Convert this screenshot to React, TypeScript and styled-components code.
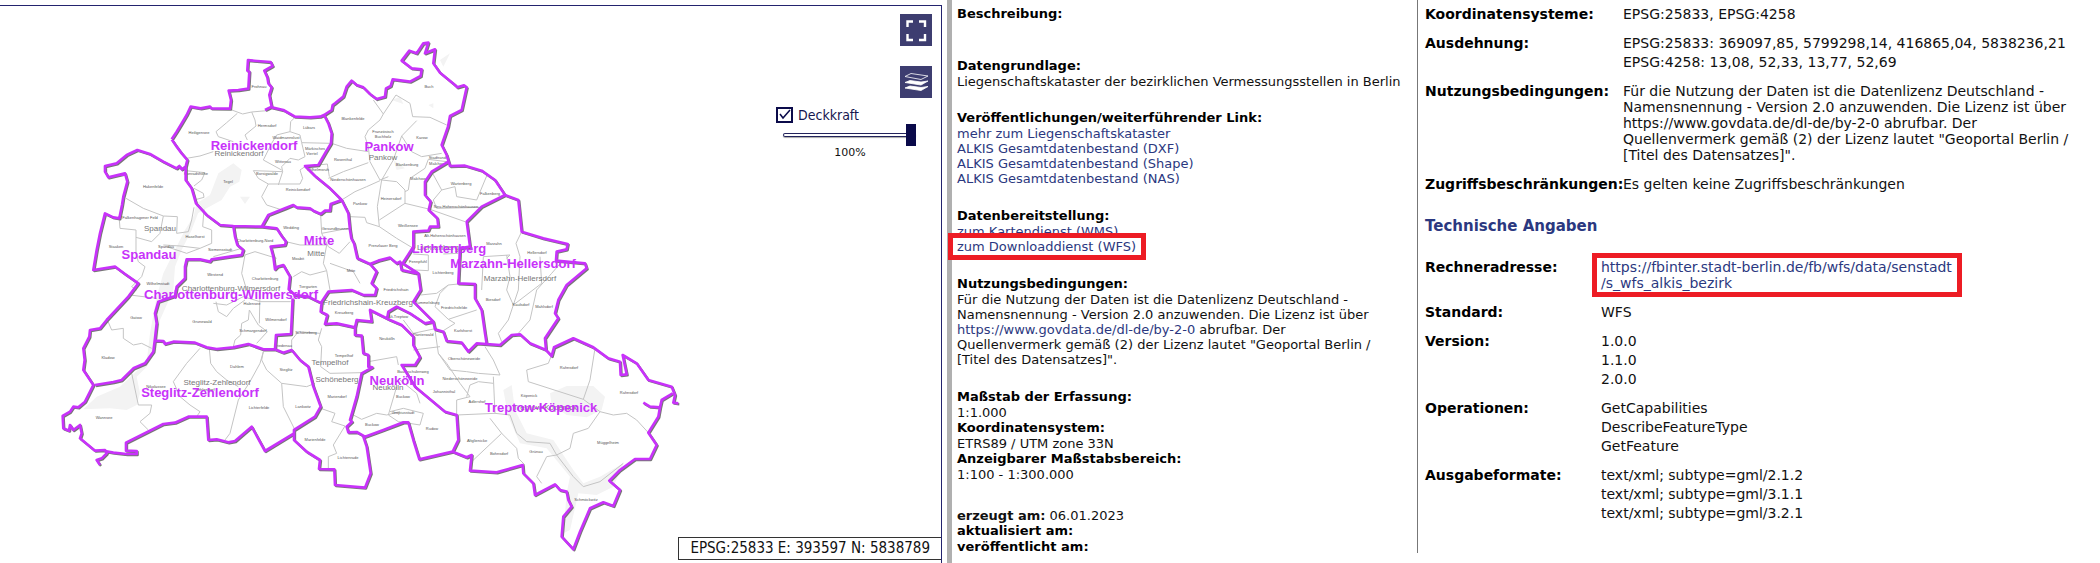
import React, { useState } from "react";
import styled, { createGlobalStyle } from "styled-components";

const GlobalStyle = createGlobalStyle`
  * { box-sizing: border-box; }
  body {
    margin: 0;
    background: #fff;
    color: #111;
    font-family: "DejaVu Sans", Verdana, sans-serif;
  }
`;

const Page = styled.main`
  display: grid;
  grid-template-columns: minmax(0, 947fr) minmax(0, 470fr) minmax(0, 683fr);
  min-height: 100vh;
`;

/* ---------- map ---------- */

const MapPanel = styled.section`
  position: relative;
  margin: 5px 5px 0 0;
  border: solid #23236e;
  border-width: 1px 1px 0 0;
`;

const MapDrawing = styled.svg`
  display: block;
  width: 100%;
  height: auto;
`;

const Tools = styled.div`
  position: absolute;
  top: 8px;
  right: 9px;
  display: flex;
  flex-direction: column;
  gap: 20px;
`;

const ToolButton = styled.button`
  display: block;
  width: 32px;
  height: 32px;
  padding: 0;
  border: 0;
  background: #3d3d70;
  cursor: pointer;
`;

const OpacityControl = styled.div`
  position: absolute;
  top: 100px;
  right: 25px;
  width: 140px;
  display: flex;
  flex-direction: column;
  align-items: flex-end;
`;

const LayerToggle = styled.label`
  align-self: flex-start;
  display: flex;
  align-items: center;
  gap: 5px;
  height: 18px;
  font: 14px/18px "DejaVu Sans Condensed", "Noto Sans", sans-serif;
  color: #16164f;
`;

const Tick = styled.input`
  appearance: none;
  width: 17px;
  height: 16px;
  margin: 0;
  border: 2px solid #0b0b4a;
  background: #fff;
  &:checked {
    background: #fff
      url("data:image/svg+xml,%3Csvg xmlns='http://www.w3.org/2000/svg' viewBox='0 0 13 12'%3E%3Cpath d='M2 5l3 4 7-8' fill='none' stroke='%230b0b4a' stroke-width='1.5'/%3E%3C/svg%3E")
      center / 13px 12px no-repeat;
  }
`;

const Slider = styled.input`
  appearance: none;
  width: 133px;
  height: 22px;
  margin: 0;
  background: transparent;
  &::-webkit-slider-runnable-track {
    height: 4px;
    border-radius: 2px;
    background: #fff;
    box-shadow: inset 0 0 0 1px #23235c, 0 1px 1px #aaa;
  }
  &::-webkit-slider-thumb {
    appearance: none;
    width: 10px;
    height: 22px;
    margin-top: -9px;
    background: #0a0a4a;
  }
`;

const Percent = styled.output`
  align-self: center;
  padding-left: 8px;
  font-size: 11px;
  line-height: 14px;
`;

const Position = styled.div`
  position: absolute;
  right: 0;
  bottom: 3px;
  padding: 0 11px;
  border: 1px solid #333;
  border-right: 0;
  background: #fff;
  font: 15px/21px "DejaVu Sans Condensed", "Noto Sans", sans-serif;
`;

/* Outlines are digitised at three units per map pixel. */
const districtLines = [
  "M515 418L530 395 545 370 560 345 572 320 602 325 630 320 634 325 690 326 693 300 686 272 715 270 745 266 748 215 742 212 744 180 760 182 812 186 818 198 793 212 802 232 805 250 815 262 808 285 815 320 795 330M815 322L850 330 885 350 930 352 960 350 972 345",
  "M972 345L985 370 995 400 993 430 978 455 955 495 915 498 945 528 990 565 1025 600",
  "M515 418L530 440 545 460 562 480 557 500 557 540 575 565 588 610 620 645 660 675 700 678 785 680 830 685 845 708 858 725 855 735 812 740 820 770 825 808 832 800 850 795 870 830 866 868 885 885 925 890 965 910",
  "M785 680L805 645 855 625 880 615 890 622 930 625 940 632 962 642 975 632 990 632 992 612 1025 600 1045 640 1050 690 1054 715 1062 730 1072 775 1110 792",
  "M700 678L705 710 712 735 730 750 725 765 690 770 635 778 630 785 600 778 560 778 555 800 555 835 530 860 525 888 475 905 465 940 470 970 465 1015 460 1055 435 1090 400 1105 365 1140 340 1146 285 1155",
  "M557 500L545 508 538 498 530 505 490 485 450 462 412 450 380 465 350 490 315 498 315 515 325 532 375 520 382 545 370 590 366 615 358 655 340 652 315 640 300 700 290 750 280 810 345 800 375 822 415 850 385 890 320 960 300 985 270 990 268 1010 250 1045 254 1080 250 1110 280 1155 255 1205 235 1222 220 1220 210 1235 188 1248 190 1285 207 1292 210 1275 220 1290 240 1275 245 1300 240 1315 285 1352 315 1350 320 1360 305 1375 290 1380 300 1395",
  "M315 1353L340 1358 380 1362 410 1362 410 1353 378 1352 378 1328 490 1272 525 1268 565 1250 620 1250 625 1320 650 1318 685 1327 705 1323 755 1280 795 1353 882 1300",
  "M972 345L995 330 998 315 1005 310 1030 290 1040 260 1055 242 1070 255 1090 262 1110 282 1130 297 1155 290 1158 265 1172 258 1178 238 1230 245 1262 228 1265 208 1235 205 1205 182 1228 152 1250 160 1270 130 1285 128 1275 160 1305 148 1300 190 1320 218 1365 255 1372 262 1392 256 1400 262 1385 330 1350 348 1344 380 1325 435 1340 465 1350 498 1395 497 1445 512 1485 540 1515 585",
  "M1345 485L1295 515 1275 545 1275 585 1292 605 1286 630 1312 655 1315 680 1290 680 1285 692 1240 695 1240 740 1208 790 1255 820 1262 870 1240 905 1300 965 1305 988 1330 995 1340 1023 1385 1028 1405 1055 1430 1030 1500 1035 1535 1005 1560 1003 1590 1030 1638 1050 1655 1068 1662 1042 1720 1015 1780 1042 1825 1075 1860 1085 1862 1125 1880 1123 1868 1065 1910 1090 1945 1140 2015 1160 2025 1185 2020 1208 2035 1210",
  "M1072 775L1110 792 1135 782 1170 773 1190 790 1200 785 1205 810 1250 820",
  "M1110 792L1130 815 1115 850 1130 865 1125 885 1090 885 1055 870 985 875 965 905 962 935 982 945 975 972 1010 970 1065 982 1065 1005 1085 1007 1090 1060 1105 1065 1105 1100 1117 1102 1085 1120 1070 1190 1050 1260 1056 1265 1040 1280 1045 1297 1070 1296 1095 1310 1150 1290 1210 1267 1225 1267 1240 1320 1258 1378 1358 1355",
  "M1515 585L1445 620 1400 665 1410 740 1380 745 1375 850 1425 852 1425 895 1445 930 1455 1000 1460 1032",
  "M1515 585L1555 600 1565 695 1630 715 1703 732 1700 748 1670 755 1668 782 1755 790 1760 805 1700 855 1675 900 1665 940 1675 955 1635 1015 1638 1050",
  "M2018 1180L1985 1200 1980 1222 1950 1220 1930 1208M1980 1222L1975 1250 1945 1298 1970 1335 1950 1377 1905 1377 1860 1410 1828 1442 1860 1470 1840 1518 1810 1507 1770 1525 1740 1595 1720 1648 1685 1610 1690 1550 1715 1520 1705 1500 1700 1475 1680 1470 1665 1453 1605 1485 1600 1450 1570 1420 1568 1395 1490 1417 1410 1412 1415 1365 1400 1372 1358 1355 1375 1320 1370 1245 1335 1235 1245 1160 1205 1095 1245 1095 1260 1072 1240 1035 1240 1010 1205 975 1170 960 1110 930 1115 965 1070 960 1065 982",
  "M1162 952L1165 935 1190 920 1230 940 1275 970 1300 965",
  "M465 1022L490 1023 495 1032 520 1025 585 1028 620 1042 650 1047 700 1042 745 1032 790 1048 825 1048 828 1005 873 1002 878 895",
  "M825 1048L850 1058 875 1050 900 1080 925 1100 940 1160 962 1220 945 1250 882 1290 882 1320 920 1355 960 1380 957 1407 1003 1408 1005 1455 1095 1463 1112 1420 1100 1340 1090 1310",
];

const quarterLines = [
  "M690 328L728 342 755 336 800 332M712 340L680 368 648 395 655 410 700 425M755 336L765 360 768 378 735 405 742 420",
  "M885 352L872 365 870 395 900 405 905 428 995 430M870 395L830 405 815 430 790 480 845 510M905 428L915 470 895 480 870 475 845 500 848 515 835 555",
  "M760 512L848 515M760 512L775 535 805 552 900 552 908 535 900 510 915 500M805 552L785 590 800 615 840 628",
  "M560 475L600 468 640 455M557 512L615 518 605 540 582 558M582 565L610 580 612 592 590 598M582 622L575 660 565 695 530 700 532 650 490 648 480 700 455 725 408 712",
  "M378 595L430 625 490 648M358 660L360 685 408 690 408 760M612 628L608 680 635 690 635 730 600 745 540 738 490 735M600 745L560 760 500 740M408 760L415 785 435 800 425 830 395 860 410 870M640 770L725 745",
  "M735 765L725 820 740 870M735 765L765 755 830 775M780 875L778 970M640 910L680 915 730 890 780 905 872 905M648 905L655 935 680 950 700 925 735 900M320 955L335 990 370 985 370 1015 400 1035 425 1030 455 1045M390 885L470 895",
  "M600 1045L560 1090 520 1145 540 1190 570 1215 600 1235 590 1250M628 1045L632 1090 650 1115 680 1140 715 1160M395 1120L415 1215 455 1215 450 1240 420 1265 445 1290M790 1055L780 1090 750 1145 715 1200 690 1300 675 1320M790 1055L785 1080 800 1110 845 1150 850 1220 885 1290M845 1150L920 1160 945 1150",
  "M700 1040L705 1020 722 1005 725 970 745 960 748 930 775 975 802 995 770 1030M875 1050L875 1020 895 995 960 1000M965 985L955 1020 965 1040 962 1100 990 1120 1085 1118M962 1225L1005 1240 995 1265 1035 1278M1035 1278L1000 1335 1010 1360 985 1370 985 1405M1060 1245L1085 1258 1130 1240 1160 1245 1200 1235",
  "M962 645L965 700 1045 685M965 700L985 740 1018 760 1050 725M858 725L900 735 980 735 970 790 980 812 930 825 905 815 880 830M980 812L990 870M990 790L1060 815 1080 850M1050 650L1095 652 1100 668 1138 680M1025 600L1065 575 1100 560 1140 542M1138 680L1132 620 1145 540 1190 545 1215 570 1215 610 1138 660M1138 680L1190 715 1240 745",
  "M1120 300L1150 342 1188 285 1230 310 1238 350 1290 352 1340 375M1150 342L1140 360 1105 390 1095 410 1105 440 1110 485 1140 540 1165 530M995 430L1040 445 1105 455M985 535L1030 515 1105 488M955 495L982 492 988 530M1250 362L1205 408 1180 480 1145 540M1205 408L1235 455 1265 470 1325 460M1340 485L1285 478 1275 505 1230 535 1225 570 1215 575M1215 610L1290 628 1395 665",
  "M1295 515L1325 570 1365 560 1370 590 1430 600 1460 528M1325 570L1300 600 1310 625 1450 622M1240 762L1285 765 1285 812 1245 810M1330 762L1375 760M1262 885L1310 880 1345 855 1375 852M1345 855L1320 880 1305 920 1345 958 1430 930M1345 958L1365 970 1330 992M1565 695L1548 730 1560 770 1555 870 1525 960 1495 1000 1505 1025M1520 775L1530 765 1450 770 1445 870M1620 770L1625 850 1540 915 1520 870 1530 830 1520 765M1690 780L1655 820 1610 870 1590 960 1555 1000",
  "M1455 1040L1480 1080 1500 1125 1435 1120 1400 1115 1350 1110 1315 1060 1305 990M1315 1060L1340 1090 1380 1150 1410 1190 1370 1200 1370 1245M1480 1130L1485 1240 1370 1245M1480 1150L1435 1145 1410 1155 1400 1190M1655 1065L1645 1090 1580 1110 1585 1145 1750 1198 1770 1140 1785 1045M1750 1198L1800 1235 1840 1245 1880 1240 1910 1260 1945 1298M1800 1235L1765 1285 1720 1300 1710 1345 1670 1365 1640 1370 1610 1430 1625 1450M1485 1240L1530 1245 1550 1300 1580 1325 1650 1330 1670 1365 1720 1430 1750 1460 1800 1445 1870 1390M1470 1255L1505 1300 1415 1385M1505 1300L1550 1345 1555 1375 1575 1395M1105 1085L1190 1070 1195 1095M1190 1160L1165 1245 1195 1265 1260 1275 1270 1240 1210 1225 1170 1235M1200 1140L1250 1180 1260 1210M1210 960L1240 1000 1310 985M1240 1050L1320 1040",
];

const waters = [
  "M700 490L725 510 718 545 690 560 665 600 610 630 585 645 590 610 630 585 655 520Z",
  "M555 690L580 650 590 610 600 625 575 690 545 750 525 800 520 870 480 960 470 1050 440 1100 410 1130 420 1180 410 1215 380 1230 330 1225 250 1228 290 1190 360 1160 440 1085 450 1000 470 890 490 820Z",
  "M1650 1180L1700 1158 1780 1158 1815 1190 1805 1230 1760 1252 1700 1245 1655 1215Z",
  "M1510 1170L1535 1155 1545 1230 1580 1300 1660 1320 1720 1410 1750 1450 1800 1430 1870 1390 1840 1460 1790 1485 1735 1480 1710 1590 1690 1600 1700 1480 1710 1430 1640 1345 1560 1330 1525 1250Z",
  "M1175 300L1200 290 1210 312 1190 305ZM1215 505L1180 480 1190 510ZM720 590L750 590 735 612ZM1285 315L1300 310 1300 325ZM1320 180L1350 160 1330 200Z",
];

const districtNames: [string, number, number][] = [
  ["Reinickendorf", 254, 150],
  ["Pankow", 389, 151],
  ["Mitte", 319, 245],
  ["Spandau", 149, 259],
  ["Lichtenberg", 449, 253],
  ["Marzahn-Hellersdorf", 513, 268],
  ["Charlottenburg-Wilmersdorf", 231, 299],
  ["Steglitz-Zehlendorf", 200, 397],
  ["Neukölln", 397, 385],
  ["Treptow-Köpenick", 541, 412],
];

const boroughNames: [string, number, number][] = [
  ["Reinickendorf", 239, 156],
  ["Pankow", 383, 160],
  ["Mitte", 316, 256],
  ["Spandau", 160, 231],
  ["Lichtenberg", 438, 250],
  ["Marzahn-Hellersdorf", 520, 281],
  ["Charlottenburg-Wilmersdorf", 231, 291],
  ["Friedrichshain-Kreuzberg", 368, 305],
  ["Steglitz-Zehlendorf", 217, 385],
  ["Tempelhof", 330, 365],
  ["Schöneberg", 337, 382],
  ["Neukölln", 388, 390],
  ["Treptow-Köpenick", 545, 410],
];

const quarterNames: [string, number, number][] = [
  ["Frohnau", 259, 88], ["Heiligensee", 199, 134], ["Hermsdorf", 267, 127], ["Lübars", 309, 129],
  ["Waidmannslust", 286, 139], ["Märkisches", 315, 150], ["Viertel", 312, 155], ["Wittenau", 283, 163],
  ["Borsigwalde", 267, 175], ["Tegel", 228, 183], ["Reinickendorf", 298, 191], ["Konradshöhe", 196, 175],
  ["Wilhelmsruh", 318, 171], ["Buch", 429, 88], ["Blankenfelde", 353, 120], ["Französisch", 383, 133],
  ["Buchholz", 383, 138], ["Karow", 422, 139], ["Rosenthal", 343, 161], ["Blankenburg", 407, 166],
  ["Stadtrand-", 438, 159], ["Malchow", 437, 165], ["Niederschönhausen", 348, 181], ["Heinersdorf", 391, 200],
  ["Pankow", 360, 205], ["Malchow", 418, 180], ["Wartenberg", 461, 185], ["Falkenberg", 490, 195],
  ["Neu-Hohenschönhausen", 456, 208], ["Weißensee", 408, 227], ["Alt-Hohenschönhausen", 445, 237],
  ["Prenzlauer Berg", 383, 247], ["Hakenfelde", 153, 188], ["Falkenhagener Feld", 140, 219],
  ["Haselhorst", 195, 238], ["Siemensstadt", 220, 251], ["Staaken", 116, 248], ["Spandau", 166, 248],
  ["Charlottenburg-Nord", 255, 242], ["Wedding", 291, 229], ["Gesundbrunnen", 336, 230],
  ["Moabit", 298, 260], ["Westend", 215, 276], ["Charlottenburg", 265, 280], ["Tiergarten", 308, 288],
  ["Mitte", 351, 272], ["Wilhelmstadt", 158, 285], ["Rummelsburg", 427, 304], ["Fennpfuhl", 418, 263],
  ["Lichtenberg", 443, 274], ["Marzahn", 494, 245], ["Hellersdorf", 537, 254], ["Biesdorf", 493, 301],
  ["Kaulsdorf", 521, 306], ["Mahlsdorf", 544, 308], ["Friedrichsfelde", 454, 309], ["Karlshorst", 463, 332],
  ["Friedrichshain", 396, 291], ["Kreuzberg", 344, 314], ["Alt-Treptow", 398, 318], ["Gatow", 136, 319],
  ["Grunewald", 202, 323], ["Halensee", 252, 305], ["Wilmersdorf", 276, 321], ["Schmargendorf", 253, 332],
  ["Schöneberg", 306, 334], ["Friedenau", 283, 347], ["Neukölln", 387, 340], ["Plänterwald", 423, 336],
  ["Tempelhof", 344, 357], ["Oberschöneweide", 464, 360], ["Kladow", 108, 359], ["Dahlem", 237, 368],
  ["Steglitz", 286, 371], ["Nikolassee", 156, 388], ["Zehlendorf", 205, 391], ["Baumschulenweg", 413, 373],
  ["Niederschöneweide", 460, 380], ["Johannisthal", 444, 393], ["Rahnsdorf", 569, 369], ["Köpenick", 529, 397],
  ["Rahnsdorf", 629, 394], ["Adlershof", 477, 403], ["Mariendorf", 337, 398],
  ["Lankwitz", 303, 408], ["Lichterfelde", 259, 409], ["Wannsee", 104, 419], ["Buckow", 403, 398],
  ["Gropiusstadt", 403, 414], ["Buckow", 372, 426], ["Rudow", 432, 430], ["Altglienicke", 477, 442],
  ["Müggelheim", 608, 444], ["Marienfelde", 315, 441], ["Bohnsdorf", 499, 455], ["Grünau", 536, 453],
  ["Lichtenrade", 348, 459], ["Schmöckwitz", 586, 501],
];

const DistrictName = styled.text`
  font: bold 13px "Liberation Sans", Arial, sans-serif;
  fill: #c832fa;
  text-anchor: middle;
`;

const BoroughName = styled.text`
  font: 8px "Liberation Sans", Arial, sans-serif;
  fill: #777;
  text-anchor: middle;
`;

const QuarterName = styled.text`
  font: 4px "Liberation Sans", Arial, sans-serif;
  fill: #555;
  text-anchor: middle;
`;

const BerlinMap = () => (
  <MapDrawing viewBox="0 6 941 557" role="img" aria-label="Bezirke von Berlin">
    <g transform="scale(0.33333)" fill="none" strokeLinejoin="round">
      <path d={waters.join("")} fill="#f3f3f3" />
      <path d={quarterLines.join("")} stroke="#c4c4c4" strokeWidth="3" />
    </g>
    {quarterNames.map(([name, x, y], i) => (
      <QuarterName key={i} x={x} y={y}>{name}</QuarterName>
    ))}
    {boroughNames.map(([name, x, y]) => (
      <BoroughName key={name} x={x} y={y}>{name}</BoroughName>
    ))}
    <g transform="scale(0.33333)" fill="none" strokeLinejoin="round">
      <path d={districtLines.join("")} stroke="#777" strokeWidth="7" transform="translate(3 3)" />
      <path d={districtLines.join("")} stroke="#c832fa" strokeWidth="8" />
    </g>
    {districtNames.map(([name, x, y]) => (
      <DistrictName key={name} x={x} y={y}>{name}</DistrictName>
    ))}
  </MapDrawing>
);

/* ---------- description column ---------- */

const Description = styled.section`
  border-left: 5px solid #b0b0b0;
  padding: 6px 0 0 5px;
  font-size: 13px;
  line-height: 15px;
`;

const Block = styled.div<{ $gap?: number }>`
  margin-bottom: ${(p) => p.$gap ?? 0}px;
`;

const Heading = styled.h2`
  margin: 0;
  font-size: 13px;
  font-weight: bold;
  line-height: 16px;
  color: #000;
`;

const Text = styled.p`
  margin: 0;
`;

const Links = styled.ul`
  margin: 0;
  padding: 0;
  list-style: none;
`;

const Link = styled.a`
  color: #2b3880;
  text-decoration: none;
`;

const Marked = styled(Link)`
  display: inline-block;
  position: relative;
  margin: -6px -9px;
  border: 5px solid #ed1c24;
  padding: 1px 5px 1px 4px;
  background: #fff;
`;

/* ---------- service details column ---------- */

const Details = styled.section`
  align-self: start;
  border-left: 1px solid #777;
  padding: 6px 0 32px 7px;
  font-size: 14px;
  line-height: 16px;
`;

const Title = styled.h2`
  margin: 0 0 23px;
  font-size: 15px;
  line-height: 20px;
  color: #2b3880;
`;

const Facts = styled.dl<{ $label: number; $after?: number }>`
  display: grid;
  grid-template-columns: ${(p) => p.$label}px minmax(0, 1fr);
  row-gap: 13px;
  margin: 0 0 ${(p) => p.$after ?? 0}px;
`;

const Term = styled.dt`
  font-weight: bold;
  white-space: nowrap;
  color: #000;
`;

const Value = styled.dd`
  margin: 0;
`;

const Items = styled.ul`
  display: flex;
  flex-direction: column;
  gap: 3px;
  margin: 0;
  padding: 0;
  list-style: none;
`;

const ItemList = ({ items }: { items: string[] }) => (
  <Items>{items.map((item) => <li key={item}>{item}</li>)}</Items>
);

export default function App() {
  const [opacity, setOpacity] = useState(100);
  const [visible, setVisible] = useState(true);

  return (
    <>
      <GlobalStyle />
      <Page>
        <MapPanel>
          <BerlinMap />
          <Tools>
            <ToolButton aria-label="Vollbild">
              <svg width="32" height="32" viewBox="0 0 32 32" fill="none" stroke="#fff" strokeWidth="2.4">
                <path d="M13 7.5H7.5V13M19 7.5h6V13M7.5 20v6H13M19 26h6v-6" />
              </svg>
            </ToolButton>
            <ToolButton aria-label="Ebenen">
              <svg width="32" height="32" viewBox="0 0 32 32" stroke="#fff" strokeLinejoin="round">
                <path d="M5 10.500L11 7.500l17 2.500-7 3.500z" fill="none" strokeWidth="0.8" />
                <path d="M5 16.500l5-2 11 1.500 7-1-7 4z" fill="#fff" strokeWidth="0.8" />
                <path d="M5 22l5-2 11 1.500 7-1-7 4z" fill="#fff" strokeWidth="0.8" />
              </svg>
            </ToolButton>
          </Tools>
          <OpacityControl>
            <LayerToggle>
              <Tick type="checkbox" checked={visible} onChange={(e) => setVisible(e.target.checked)} />
              Deckkraft
            </LayerToggle>
            <Slider
              type="range"
              aria-label="Deckkraft in Prozent"
              value={opacity}
              onChange={(e) => setOpacity(Number(e.target.value))}
            />
            <Percent>{opacity}%</Percent>
          </OpacityControl>
          <Position>EPSG:25833 E: 393597 N: 5838789</Position>
        </MapPanel>

        <Description>
          <Block $gap={36}>
            <Heading>Beschreibung:</Heading>
          </Block>
          <Block $gap={21}>
            <Heading>Datengrundlage:</Heading>
            <Text>Liegenschaftskataster der bezirklichen Vermessungsstellen in Berlin</Text>
          </Block>
          <Block $gap={22}>
            <Heading>Veröffentlichungen/weiterführender Link:</Heading>
            <Links>
              <li><Link href="#kataster">mehr zum Liegenschaftskataster</Link></li>
              <li><Link href="#dxf">ALKIS Gesamtdatenbestand (DXF)</Link></li>
              <li><Link href="#shape">ALKIS Gesamtdatenbestand (Shape)</Link></li>
              <li><Link href="#nas">ALKIS Gesamtdatenbestand (NAS)</Link></li>
            </Links>
          </Block>
          <Block $gap={22}>
            <Heading>Datenbereitstellung:</Heading>
            <Links>
              <li><Link href="#wms">zum Kartendienst (WMS)</Link></li>
              <li><Marked href="#wfs">zum Downloaddienst (WFS)</Marked></li>
            </Links>
          </Block>
          <Block $gap={22}>
            <Heading>Nutzungsbedingungen:</Heading>
            <Text>
              Für die Nutzung der Daten ist die Datenlizenz Deutschland -<br />
              Namensnennung - Version 2.0 anzuwenden. Die Lizenz ist über<br />
              <Link href="https://www.govdata.de/dl-de/by-2-0">https://www.govdata.de/dl-de/by-2-0</Link> abrufbar. Der<br />
              Quellenvermerk gemäß (2) der Lizenz lautet "Geoportal Berlin /<br />
              [Titel des Datensatzes]".
            </Text>
          </Block>
          <Block $gap={26}>
            <Heading>Maßstab der Erfassung:</Heading>
            <Text>1:1.000</Text>
            <Heading>Koordinatensystem:</Heading>
            <Text>ETRS89 / UTM zone 33N</Text>
            <Heading>Anzeigbarer Maßstabsbereich:</Heading>
            <Text>1:100 - 1:300.000</Text>
          </Block>
          <Block>
            <Text><b>erzeugt am:</b> 06.01.2023</Text>
            <Heading>aktualisiert am:</Heading>
            <Heading>veröffentlicht am:</Heading>
          </Block>
        </Description>

        <Details>
          <Facts $label={198} $after={24}>
            <Term>Koordinatensysteme:</Term>
            <Value>EPSG:25833, EPSG:4258</Value>
            <Term>Ausdehnung:</Term>
            <Value>
              <ItemList
                items={[
                  "EPSG:25833: 369097,85, 5799298,14, 416865,04, 5838236,21",
                  "EPSG:4258: 13,08, 52,33, 13,77, 52,69",
                ]}
              />
            </Value>
            <Term>Nutzungsbedingungen:</Term>
            <Value>
              Für die Nutzung der Daten ist die Datenlizenz Deutschland -<br />
              Namensnennung - Version 2.0 anzuwenden. Die Lizenz ist über<br />
              https://www.govdata.de/dl-de/by-2-0 abrufbar. Der<br />
              Quellenvermerk gemäß (2) der Lizenz lautet "Geoportal Berlin /<br />
              [Titel des Datensatzes]".
            </Value>
            <Term>Zugriffsbeschränkungen:</Term>
            <Value>Es gelten keine Zugriffsbeschränkungen</Value>
          </Facts>
          <Title>Technische Angaben</Title>
          <Facts $label={176}>
            <Term>Rechneradresse:</Term>
            <Value>
              <Marked href="https://fbinter.stadt-berlin.de/fb/wfs/data/senstadt/s_wfs_alkis_bezirk">
                https://fbinter.stadt-berlin.de/fb/wfs/data/senstadt<br />/s_wfs_alkis_bezirk
              </Marked>
            </Value>
            <Term>Standard:</Term>
            <Value>WFS</Value>
            <Term>Version:</Term>
            <Value><ItemList items={["1.0.0", "1.1.0", "2.0.0"]} /></Value>
            <Term>Operationen:</Term>
            <Value><ItemList items={["GetCapabilities", "DescribeFeatureType", "GetFeature"]} /></Value>
            <Term>Ausgabeformate:</Term>
            <Value>
              <ItemList
                items={["text/xml; subtype=gml/2.1.2", "text/xml; subtype=gml/3.1.1", "text/xml; subtype=gml/3.2.1"]}
              />
            </Value>
          </Facts>
        </Details>
      </Page>
    </>
  );
}
